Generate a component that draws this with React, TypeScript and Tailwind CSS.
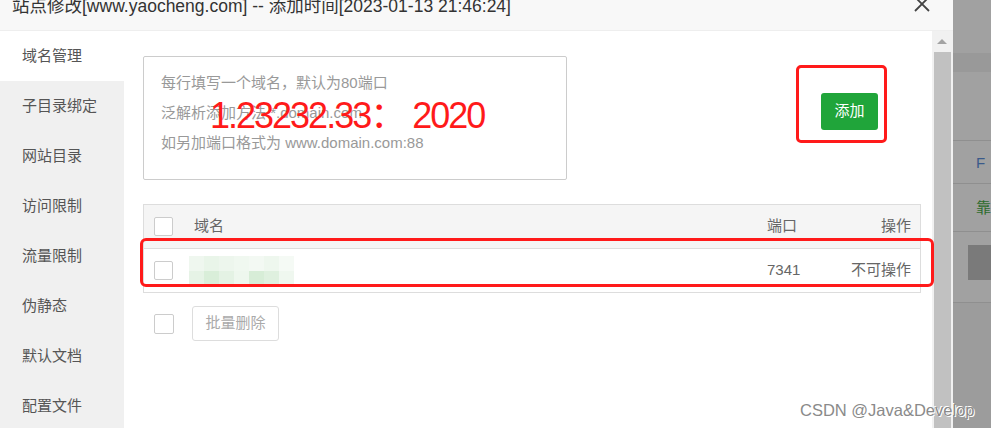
import React from 'react';

const menu = ['域名管理', '子目录绑定', '网站目录', '访问限制', '流量限制', '伪静态', '默认文档', '配置文件'];

// pixelated (blurred) domain name in the table row
const mosaic = [
  ['#eff7ef', '#e9f5e9', '#edf6ed', '#f0f8f0', '#f3f9f3', '#eef7ee', '#f5faf5'],
  ['#e6f3e6', '#d9eed9', '#e4f2e4', '#eef7ee', '#d7edd7', '#dff0df', '#eff7ef'],
];

const Checkbox: React.FC = () => (
  <div className="w-[19px] h-[19px] border border-[#ccc] rounded-[2px] bg-white shrink-0" />
);

const App: React.FC = () => {
  return (
    <div
      className="w-[991px] h-[428px] flex overflow-hidden relative bg-white text-[#555]"
      style={{ fontFamily: '"Liberation Sans", "Noto Sans CJK SC", sans-serif' }}
    >
      {/* 弹窗 */}
      <div className="w-[962px] h-full flex flex-col">
        <div className="h-[31px] shrink-0 bg-[#f8f8f8] border-b border-[#eee] flex justify-between overflow-hidden">
          <div className="pl-[12px] -mt-[5px] text-[17.5px] leading-[22px] text-[#333] whitespace-nowrap">
            站点修改[www.yaocheng.com] -- 添加时间[2023-01-13 21:46:24]
          </div>
          <svg width="20" height="20" viewBox="0 0 20 20" className="mr-[21px] -mt-[6px]">
            <path d="M3 3 L17 17 M17 3 L3 17" stroke="#444" strokeWidth="1.8" fill="none" />
          </svg>
        </div>

        <div className="flex flex-1 min-h-0">
          {/* 左侧菜单 */}
          <div className="w-[124px] bg-[#f0f0f0] shrink-0">
            {menu.map((m, i) => (
              <div
                key={m}
                className={`h-[50px] flex items-center pl-[22px] text-[15px] text-[#555] ${i === 0 ? 'bg-white' : ''}`}
              >
                {m}
              </div>
            ))}
          </div>

          {/* 内容 */}
          <div className="flex-1 relative pl-[19px] pt-[25px]">
            <div className="flex items-start">
              <div className="w-[424px] h-[124px] border border-[#ccc] rounded-[2px] pl-[17px] pt-[11px] text-[15px] leading-[30px] text-[#999]">
                <div>每行填写一个域名，默认为80端口</div>
                <div>泛解析添加方法 *.domain.com</div>
                <div>如另加端口格式为 www.domain.com:88</div>
              </div>
              <button className="ml-[254px] mt-[37px] w-[57px] h-[37px] bg-[#20a53a] rounded-[3px] text-white text-[15px]">
                添加
              </button>
            </div>

            <div className="mt-[24px] w-[778px] border border-[#ddd] text-[15px] text-[#666]">
              <div className="h-[44px] bg-[#f5f5f5] flex items-center pl-[10px] pr-[9px] border-b border-[#ddd]">
                <Checkbox />
                <span className="ml-[21px] flex-1">域名</span>
                <span className="w-[80px]">端口</span>
                <span className="w-[64px] text-right">操作</span>
              </div>
              <div className="h-[43px] flex items-center pl-[10px] pr-[9px]">
                <Checkbox />
                <div className="ml-[16px] flex-1">
                  <div className="flex flex-col w-[105px]">
                    {mosaic.map((row, r) => (
                      <div key={r} className="flex">
                        {row.map((c, k) => (
                          <div key={k} className="w-[15px] h-[15px]" style={{ background: c }} />
                        ))}
                      </div>
                    ))}
                  </div>
                </div>
                <span className="w-[80px]">7341</span>
                <span className="w-[64px] text-right">不可操作</span>
              </div>
            </div>

            <div className="mt-[13px] flex items-center pl-[11px]">
              <div className="w-[20px] h-[20px] border border-[#ccc] rounded-[2px]" />
              <button className="ml-[18px] w-[87px] h-[35px] border border-[#ddd] rounded-[3px] text-[15px] text-[#aaa] bg-white">
                批量删除
              </button>
            </div>

            {/* 红色标注 */}
            <div className="absolute left-[86px] top-[67px] text-[36px] leading-[36px] tracking-[-2px] text-[#ff1a1a] whitespace-nowrap">
              1.23232.33： 2020
            </div>
            <div className="absolute left-[672px] top-[34px] w-[91px] h-[78px] border-[3px] border-[#ff1a1a] rounded-[5px]" />
            <div className="absolute left-[16px] top-[207px] w-[794px] h-[49px] border-[3px] border-[#ff1a1a] rounded-[6px]" />
          </div>

          {/* 滚动条 */}
          <div className="w-[21px] bg-[#f1f1f1] flex flex-col items-center shrink-0">
            <div className="h-[21px] flex items-center justify-center">
              <div className="w-0 h-0 border-l-[5px] border-r-[5px] border-b-[5px] border-l-transparent border-r-transparent border-b-[#a3a3a3]" />
            </div>
            <div className="w-[17px] flex-1 bg-[#c1c1c1]" />
          </div>
        </div>
      </div>

      {/* 遮罩后的页面 */}
      <div className="flex-1 bg-[#a1a1a1] flex flex-col">
        <div className="h-[53px]" />
        <div className="h-[19px] bg-[#999]" />
        <div className="h-[69px] border-b border-[#8f8f8f]" />
        <div className="h-[43px] border-b border-[#8f8f8f] pl-[23px] text-[15px] leading-[43px] text-[#3a5a8a] overflow-hidden">F</div>
        <div className="h-[48px] border-b border-[#8f8f8f] pl-[23px] text-[15px] leading-[48px] text-[#2d6b2d] overflow-hidden">靠</div>
        <div className="h-[13px]" />
        <div className="h-[35px] ml-[15px] bg-[#7a7a7a]" />
        <div className="h-[22px]" />
        <div className="flex-1 bg-[#9c9c9c] border-t border-[#8f8f8f]" />
      </div>

      {/* 水印 */}
      <div
        className="absolute left-[800px] top-[398px] text-[16.5px] text-[#8a8a8a] whitespace-nowrap"
        style={{ textShadow: '1px 1px 0 #fff, -1px -1px 0 #fff' }}
      >
        CSDN @Java&amp;Develop
      </div>
    </div>
  );
};

export default App;
